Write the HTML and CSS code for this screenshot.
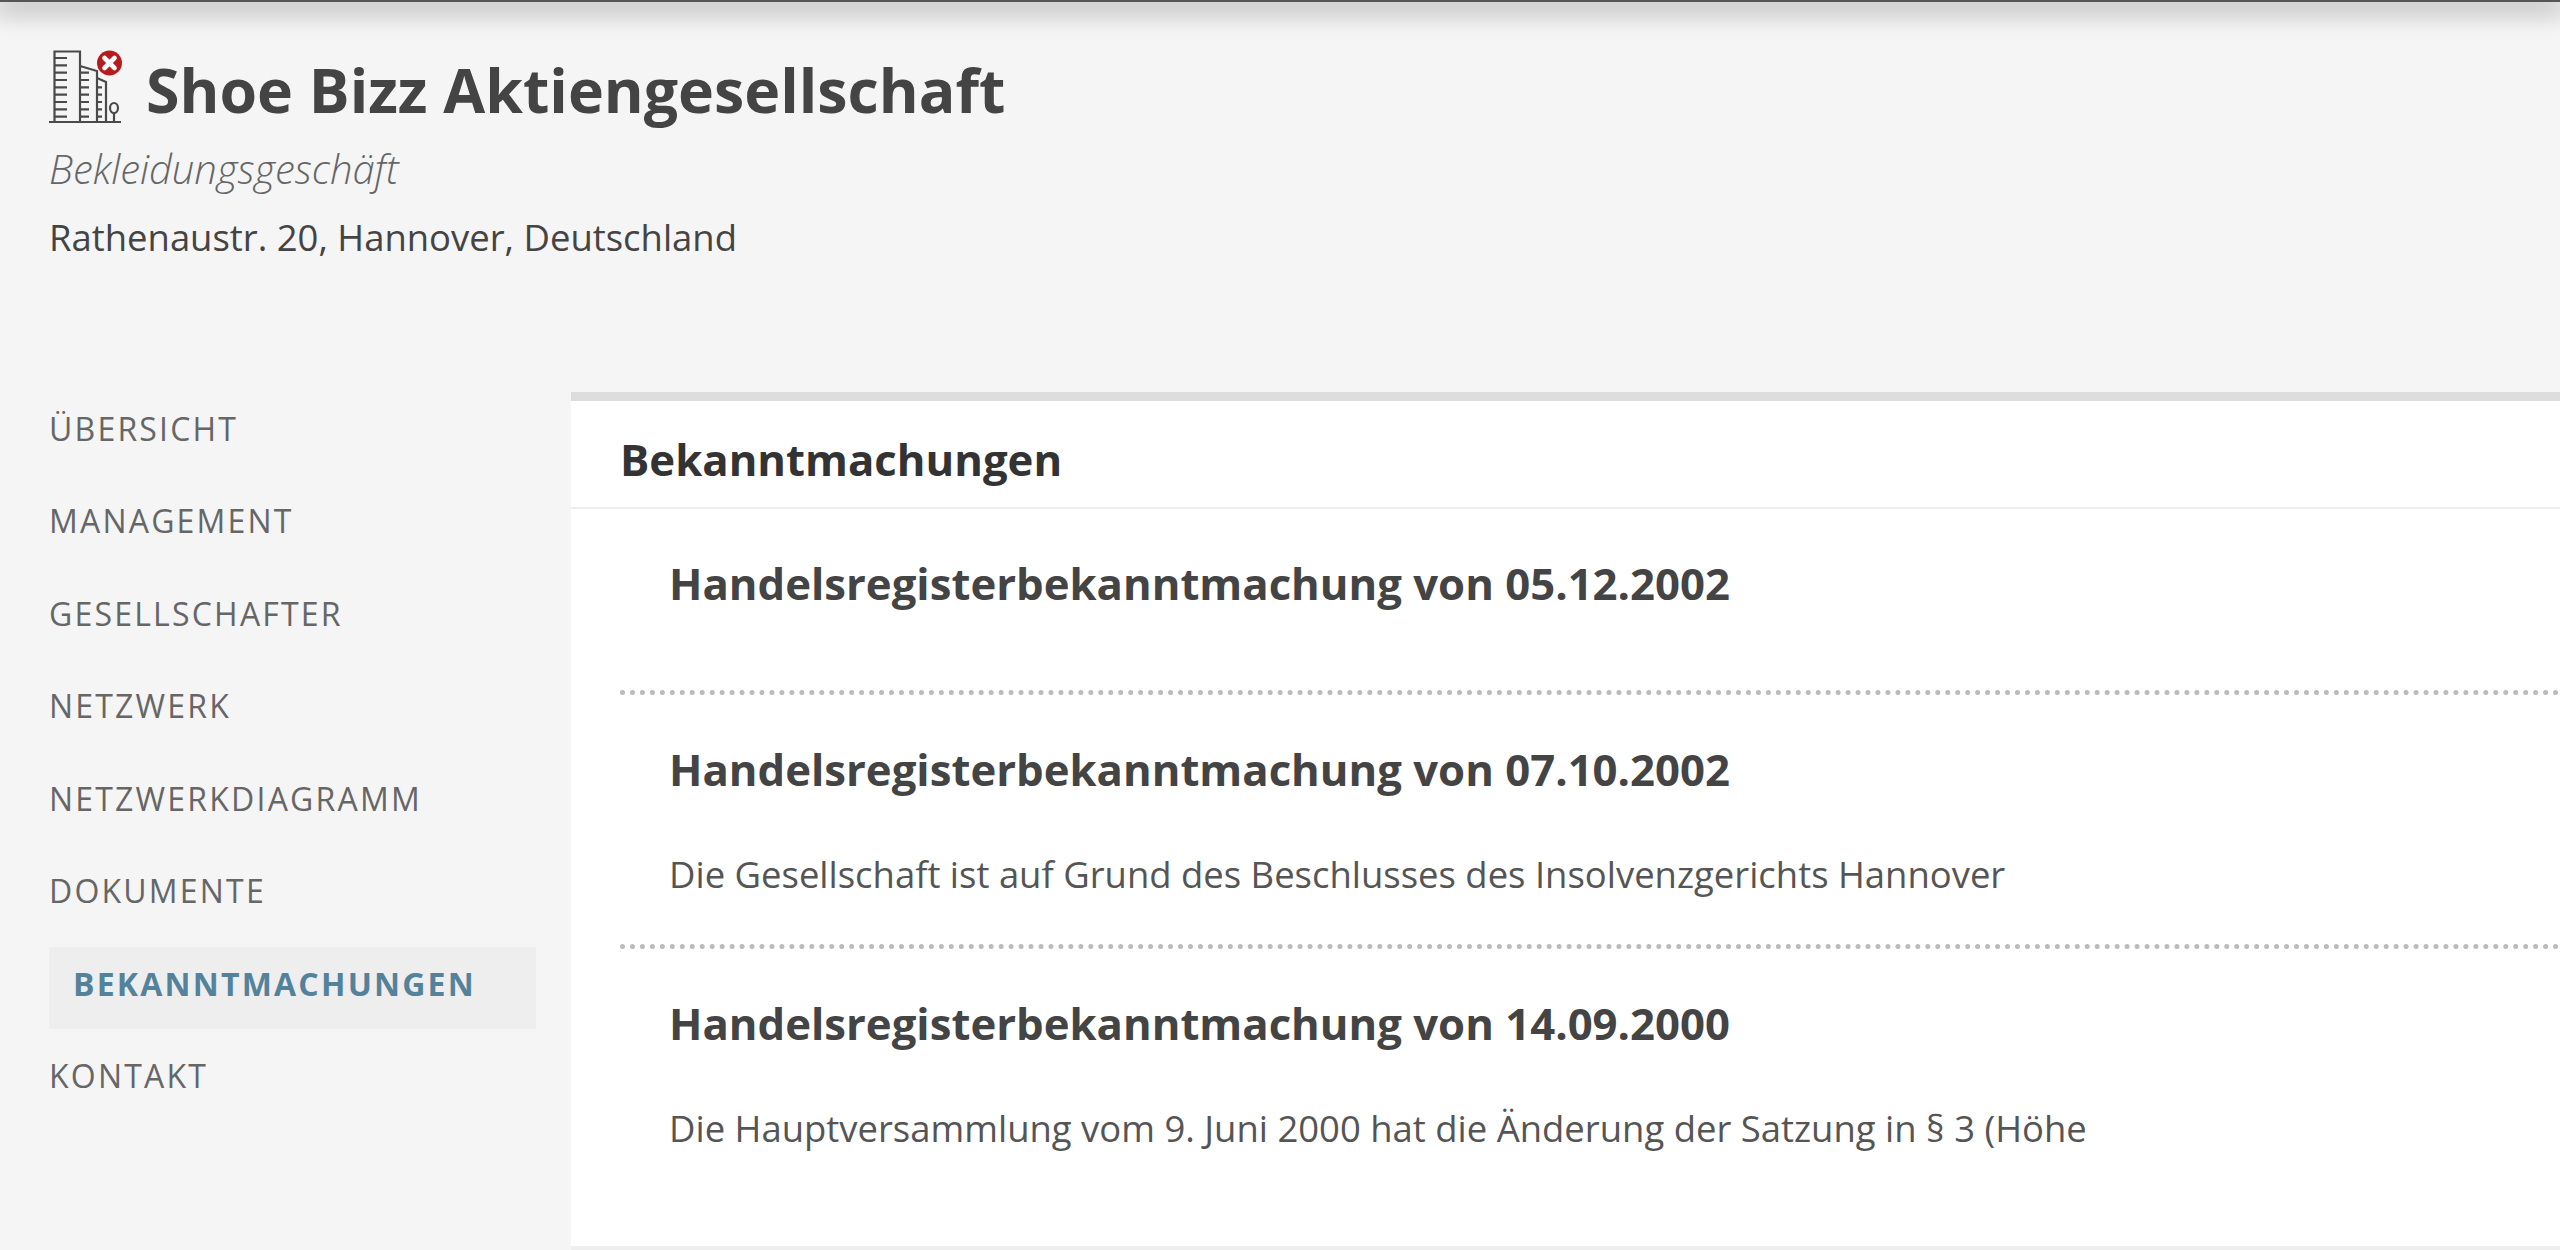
FILE: index.html
```html
<!DOCTYPE html>
<html lang="de">
<head>
<meta charset="utf-8">
<title>Shoe Bizz Aktiengesellschaft</title>
<link rel="stylesheet" href="styles.css">
</head>
<body>
<div class="topbar"></div>
<header class="head">
  <div class="title-row">
    <svg class="logo" viewBox="0 0 76 76" width="76" height="76" aria-hidden="true">
      <g fill="none" stroke="#4a4a4a" stroke-width="2.2">
        <path d="M6.5 73V2.5H32V73"/>
        <path d="M32 17l17 5v51"/>
        <path d="M49 29l9 4v40"/>
        <path d="M1 73h72"/>
        <path d="M6 9h13M6 16.3h13M6 23.6h13M6 31h13M6 38.3h13M6 45.6h13M6 53h13M6 60.3h13M6 67.6h13"/>
        <path d="M32 23.6h9M32 31h9M32 38.3h9M32 45.6h9M32 53h9M32 60.3h9M32 67.6h9"/>
        <path d="M49 38.3h5M49 45.6h5M49 53h5M49 60.3h5M49 67.6h5"/>
        <ellipse cx="66" cy="59" rx="4" ry="5"/>
        <path d="M66 64v9"/>
      </g>
      <circle cx="61.5" cy="14" r="12.5" fill="#b71c1c"/>
      <path d="M56.5 9l10 10M66.5 9l-10 10" stroke="#fff" stroke-width="4.6" stroke-linecap="round"/>
    </svg>
    <h1 class="title">Shoe Bizz Aktiengesellschaft</h1>
  </div>
  <p class="branch">Bekleidungsgeschäft</p>
  <p class="address">Rathenaustr. 20, Hannover, Deutschland</p>
</header>
<div class="layout">
  <nav class="nav">
    <a class="nav-item">Übersicht</a>
    <a class="nav-item">Management</a>
    <a class="nav-item">Gesellschafter</a>
    <a class="nav-item">Netzwerk</a>
    <a class="nav-item">Netzwerkdiagramm</a>
    <a class="nav-item">Dokumente</a>
    <a class="nav-item active">Bekanntmachungen</a>
    <a class="nav-item">Kontakt</a>
  </nav>
  <main class="panel">
    <h2 class="panel-title">Bekanntmachungen</h2>
    <article class="entry">
      <h3 class="entry-title">Handelsregisterbekanntmachung von 05.12.2002</h3>
    </article>
    <article class="entry">
      <h3 class="entry-title">Handelsregisterbekanntmachung von 07.10.2002</h3>
      <p class="entry-text">Die Gesellschaft ist auf Grund des Beschlusses des Insolvenzgerichts Hannover</p>
    </article>
    <article class="entry">
      <h3 class="entry-title">Handelsregisterbekanntmachung von 14.09.2000</h3>
      <p class="entry-text">Die Hauptversammlung vom 9. Juni 2000 hat die Änderung der Satzung in § 3 (Höhe</p>
    </article>
  </main>
</div>
</body>
</html>
```
FILE: styles.css
```css
* { box-sizing: border-box; }
html, body { margin: 0; height: 1250px; overflow: hidden; }
body { background: #f5f5f5; font-family: "Open Sans", sans-serif; color: #444; }
.topbar { height: 2px; background: #555; box-shadow: 0 3px 26px 6px rgba(0,0,0,.32); }
.head { padding: 46px 0 0 49px; height: 390px; }
.title-row { display: flex; align-items: center; gap: 22px; }
.logo { flex: none; margin: -6px 0 0 -1px; }
.title { margin: 0; font-size: 60.8px; line-height: 84px; font-weight: 700; color: #444; }
.branch { margin: 12px 0 0; font-size: 40px; line-height: 50px; font-style: italic; font-weight: 300; color: #666; }
.address { margin: 18px 0 0; font-size: 36.45px; line-height: 50px; color: #444; }
.layout { display: flex; align-items: flex-start; }
.nav { width: 571px; flex: none; display: flex; flex-direction: column; padding-left: 49px; padding-top: 12px; }
.nav-item { height: 92.4px; width: 487px; line-height: 50px; font-size: 32px; letter-spacing: 2.2px; text-transform: uppercase; color: #666; font-weight: 400; }
.nav-item.active { height: 82px; margin: -11px 0 21.4px; line-height: 74px; padding-left: 24px; background: #eee; color: #55829b; font-weight: 700; }
.panel { flex: 1; height: 858px; background: #fff; border-top: 9px solid #ddd; border-bottom: 4px solid #eee; }
.panel-title { margin: 0; height: 108px; line-height: 116px; padding-left: 49px; font-size: 43.7px; font-weight: 700; color: #333; border-bottom: 2px solid #eee; }
.entry { margin-left: 49px; padding: 44px 0 0 49px; height: 186px; border-bottom: 5px dotted #bbb; }
.entry + .entry { height: 254px; }
.entry:last-child { border-bottom: 0; }
.entry-title { margin: 0; font-size: 43.7px; line-height: 60px; font-weight: 700; color: #444; }
.entry-text { margin: 50px 0 0; font-size: 36.45px; line-height: 50px; color: #555; }
```
